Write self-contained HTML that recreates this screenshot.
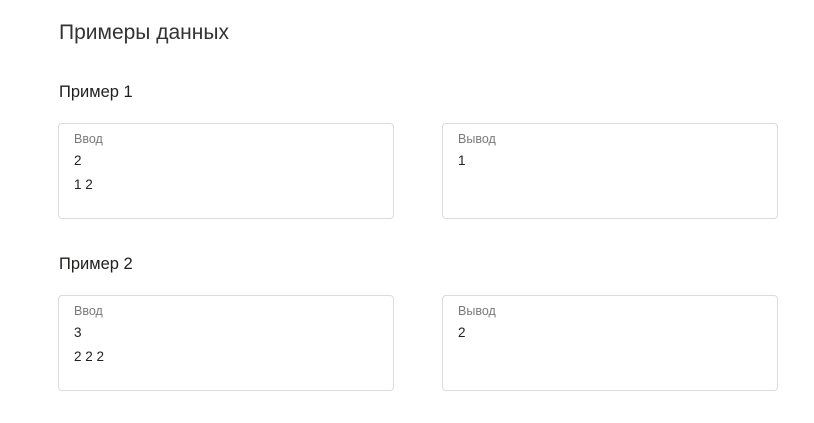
<!DOCTYPE html>
<html><head><meta charset="utf-8"><style>
body{margin:0;background:#fff;font-family:"Liberation Sans",sans-serif;color:#21201f;width:814px;height:423px;overflow:hidden;position:relative}
.h1{position:absolute;left:59px;top:21px;font-size:21px;color:#333}
.h2{position:absolute;left:59px;font-size:16.5px;color:#21201f}
.box{position:absolute;width:334px;height:94px;border:1px solid #dcdcdc;border-radius:4px;box-sizing:border-box}
.lbl{position:absolute;left:15px;top:8px;font-size:12.5px;color:#7a7a7a}
.val{position:absolute;left:15px;top:25px;font-size:13.5px;line-height:24px}
</style></head><body>
<div class="h1">Примеры данных</div>
<div class="h2" style="top:83px">Пример 1</div>
<div class="box" style="left:58px;top:123px;width:336px;height:96px"><div class="lbl">Ввод</div><div class="val">2<br>1 2</div></div>
<div class="box" style="left:442px;top:123px;width:336px;height:96px"><div class="lbl">Вывод</div><div class="val">1</div></div>
<div class="h2" style="top:255px">Пример 2</div>
<div class="box" style="left:58px;top:295px;width:336px;height:96px"><div class="lbl">Ввод</div><div class="val">3<br>2 2 2</div></div>
<div class="box" style="left:442px;top:295px;width:336px;height:96px"><div class="lbl">Вывод</div><div class="val">2</div></div>
</body></html>
